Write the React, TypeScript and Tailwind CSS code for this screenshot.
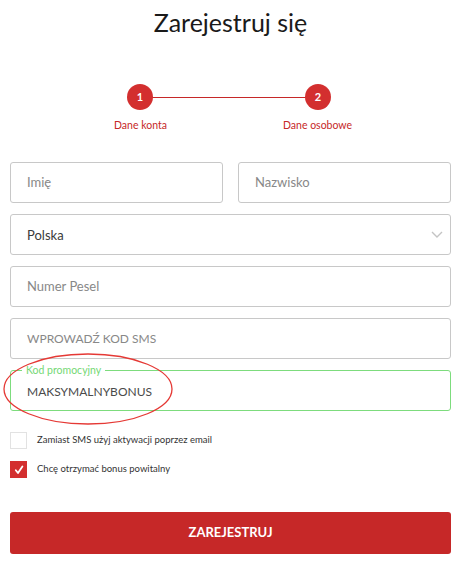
export default function App() {
  const font = { fontFamily: "Lato, 'Noto Sans', sans-serif" };

  return (
    <div className="min-h-[566px] w-[461px] bg-white text-[#222]" style={font}>
      <h1 className="pt-[6px] text-center text-[25px] leading-[32px] text-[#1a1a1a]">Zarejestruj się</h1>

      <div className="relative mx-auto mt-[46px] h-[50px] w-[461px]">
        <div className="absolute left-[140px] top-[13px] h-px w-[178px] bg-[#c62828]" />
        <div className="absolute left-[127px] top-0 flex h-[26px] w-[26px] items-center justify-center rounded-full bg-[#d32f2f] text-[11px] font-bold text-white">
          1
        </div>
        <div className="absolute left-[305px] top-0 flex h-[26px] w-[26px] items-center justify-center rounded-full bg-[#d32f2f] text-[11px] font-bold text-white">
          2
        </div>
        <span className="absolute left-[114px] top-[35px] text-[10.5px] leading-[13px] text-[#c62828]">Dane konta</span>
        <span className="absolute left-[283px] top-[35px] text-[10.5px] leading-[13px] text-[#c62828]">Dane osobowe</span>
      </div>

      <div className="mt-[28px] flex flex-col gap-[11px] px-[10px]">
        <div className="flex gap-[15px]">
          <div className="flex h-[41px] flex-1 items-center rounded-[3px] border border-[#c8c8c8] pl-[16px] text-[13px] text-[#888]">
            Imię
          </div>
          <div className="flex h-[41px] flex-1 items-center rounded-[3px] border border-[#c8c8c8] pl-[16px] text-[13px] text-[#888]">
            Nazwisko
          </div>
        </div>

        <div className="flex h-[41px] items-center justify-between rounded-[3px] border border-[#c8c8c8] pl-[16px] pr-[7px] text-[13px] text-[#3a3a3a]">
          <span className="pt-[2px]">Polska</span>
          <svg width="12" height="7" viewBox="0 0 12 7" fill="none" stroke="#c4c4c4" strokeWidth="1.4">
            <path d="M1 1l5 5 5-5" />
          </svg>
        </div>

        <div className="flex h-[41px] items-center rounded-[3px] border border-[#c8c8c8] pl-[16px] text-[13px] text-[#888]">
          Numer Pesel
        </div>

        <div className="flex h-[41px] items-center rounded-[3px] border border-[#c8c8c8] pl-[16px] text-[12px] text-[#888]">
          WPROWADŹ KOD SMS
        </div>

        <div className="relative flex h-[41px] items-center rounded-[3px] border border-[#7ddc7d] pl-[16px] text-[12px] text-[#4a4a4a]">
          <span className="absolute left-[11px] top-[-7px] bg-white px-[4px] text-[10.5px] leading-[12px] text-[#74d874]">
            Kod promocyjny
          </span>
          <span className="pt-[2px]">MAKSYMALNYBONUS</span>
          <svg className="absolute left-[-8px] top-[-18px]" width="172" height="74" viewBox="0 0 172 74" fill="none">
            <ellipse cx="85" cy="36" rx="84" ry="35" stroke="#e53935" strokeWidth="1.3" />
          </svg>
        </div>
      </div>

      <div className="mt-[21px] flex flex-col gap-[12px] px-[10px]">
        <label className="flex items-center gap-[10px] text-[9.5px] text-[#333]">
          <span className="h-[17px] w-[17px] border border-[#e2e2e2]" />
          Zamiast SMS użyj aktywacji poprzez email
        </label>
        <label className="flex items-center gap-[10px] text-[9.5px] text-[#333]">
          <span className="flex h-[17px] w-[17px] items-center justify-center bg-[#d32f2f]">
            <svg width="10" height="10" viewBox="0 0 10 10" fill="none" stroke="white" strokeWidth="1.8" strokeLinecap="round" strokeLinejoin="round">
              <path d="M1.8 5.2l2.2 2.8 4.4-6.5" />
            </svg>
          </span>
          Chcę otrzymać bonus powitalny
        </label>
      </div>

      <div className="mt-[34px] px-[10px]">
        <button className="flex h-[42px] w-full items-center justify-center rounded-[3px] bg-[#c62828] text-[13px] font-bold text-white">
          ZAREJESTRUJ
        </button>
      </div>
    </div>
  );
}
